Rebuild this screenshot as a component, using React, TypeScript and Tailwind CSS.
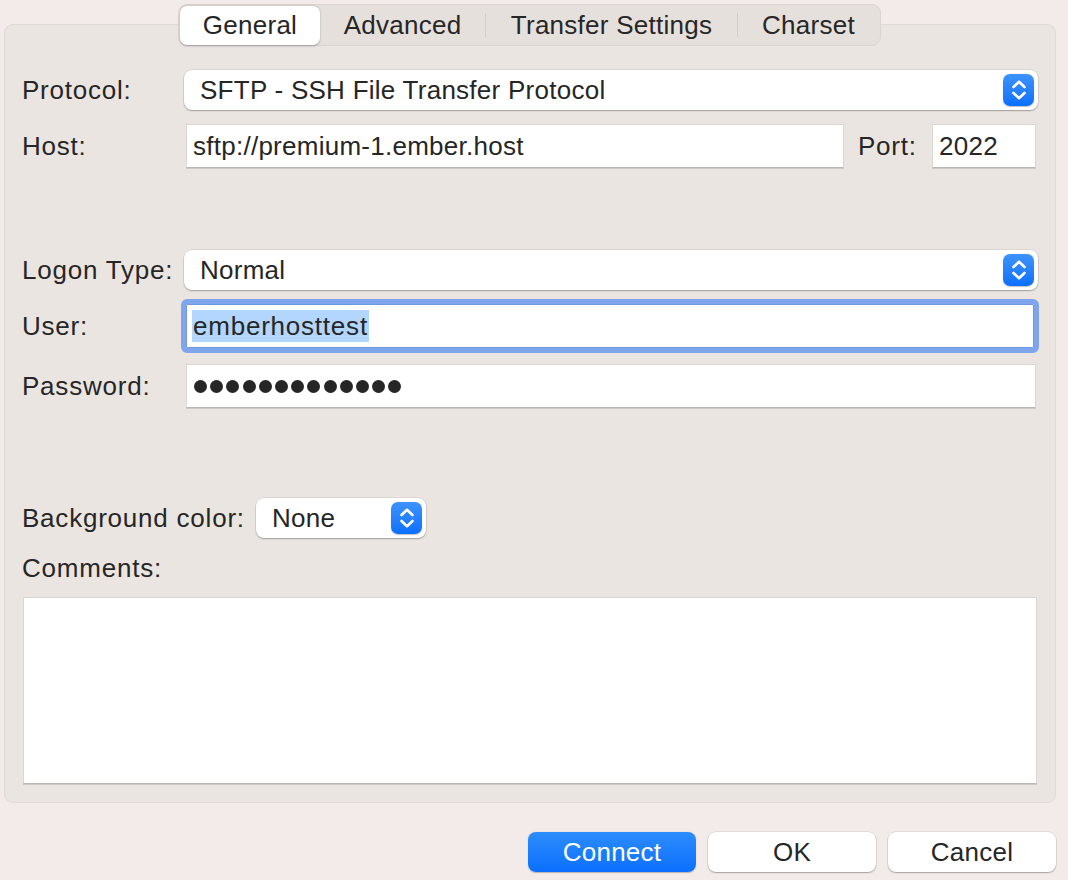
import React from "react";

function Stepper({ size = 32 }: { size?: number }) {
  return (
    <div className="flex items-center justify-center rounded-[7px] bg-gradient-to-b from-[#3d93fb] to-[#0a6ffe] shadow-[0_0.5px_1px_rgba(0,0,0,0.25)]" style={{ width: size - 1, height: size }}>
      <svg width="20" height="24" viewBox="0 0 20 24" fill="none">
        <path d="M4.5 9 L10 3.8 L15.5 9" stroke="white" strokeWidth="2.6" strokeLinecap="round" strokeLinejoin="round" />
        <path d="M4.5 15 L10 20.2 L15.5 15" stroke="white" strokeWidth="2.6" strokeLinecap="round" strokeLinejoin="round" />
      </svg>
    </div>
  );
}

function Select({ value, className = "" }: { value: string; className?: string }) {
  return (
    <div className={"flex h-[40px] items-center justify-between rounded-[8px] bg-white pl-[16px] pr-[4px] shadow-[0_0_0_0.5px_rgba(0,0,0,0.12),0_1px_1.5px_rgba(0,0,0,0.28)] " + className}>
      <span>{value}</span>
      <Stepper />
    </div>
  );
}

function Input({ children, className = "" }: { children?: React.ReactNode; className?: string }) {
  return (
    <div className={"flex h-[44px] items-center bg-white pl-[6px] border border-[#dcd6d3] border-b-[#bdb7b4] shadow-[0_0.5px_0.5px_rgba(0,0,0,0.12)] " + className}>
      {children}
    </div>
  );
}

export default function App() {
  const label = "w-[162px] shrink-0 tracking-[0.03em]";
  return (
    <div className="flex h-[880px] w-[1068px] flex-col overflow-hidden bg-[#f3ebe9] text-[26px] leading-none text-[#262626] font-['Liberation_Sans',Arial,sans-serif] tracking-[0.01em]">
      {/* Tabs */}
      <div className="relative z-10 ml-[178px] mt-[4px] flex h-[42px] w-[703px] items-center self-start rounded-[9px] border border-[#dbd5d2] bg-[#e6e0dd] pl-[1px]">
        <div className="flex h-[39px] w-[140px] items-center justify-center rounded-[7px] bg-white shadow-[0_0.5px_2px_rgba(0,0,0,0.3)]">General</div>
        <div className="flex h-[39px] w-[165px] items-center justify-center">Advanced</div>
        <div className="h-[24px] w-px bg-[#d3cdca]" />
        <div className="flex h-[39px] w-[251px] items-center justify-center">Transfer Settings</div>
        <div className="h-[24px] w-px bg-[#d3cdca]" />
        <div className="flex h-[39px] w-[141px] items-center justify-center">Charset</div>
      </div>

      {/* Group box */}
      <div className="mx-[4px] mt-[-22px] flex h-[779px] w-[1052px] flex-col rounded-[9px] border border-[#e0dad7] bg-[#ebe5e2] px-[17px] pt-[45px]">
        <div className="flex h-[40px] items-center">
          <div className={label}>Protocol:</div>
          <Select value="SFTP - SSH File Transfer Protocol" className="flex-1" />
        </div>
        <div className="mt-[14px] flex h-[44px] items-center">
          <div className={label}>Host:</div>
          <Input className="ml-[2px] w-[658px]">sftp://premium-1.ember.host</Input>
          <div className="ml-[14px] w-[74px] tracking-[0.03em]">Port:</div>
          <Input className="w-[104px]">2022</Input>
        </div>

        <div className="mt-[82px] flex h-[40px] items-center">
          <div className={label}>Logon Type:</div>
          <Select value="Normal" className="flex-1" />
        </div>
        <div className="mt-[14px] flex h-[44px] items-center">
          <div className={label}>User:</div>
          <div className="ml-[2px] mr-[4px] flex h-[44px] flex-1 items-center rounded-[1px] border border-[#6f98e2] bg-white pl-[5px] outline outline-[5px] outline-[#7fa6ec]">
            <span className="flex h-[32px] items-center bg-[#b3d6fe] px-px tracking-[0.03em]">emberhosttest</span>
          </div>
        </div>
        <div className="mt-[16px] flex h-[44px] items-center">
          <div className={label}>Password:</div>
          <Input className="ml-[2px] mr-[2px] flex-1 pl-[7px]">
            <span className="flex gap-[3.2px]">
              {Array.from({ length: 13 }).map((_, i) => (
                <span key={i} className="inline-block h-[13px] w-[13px] rounded-full bg-[#262626]" />
              ))}
            </span>
          </Input>
        </div>

        <div className="mt-[90px] flex h-[40px] items-center">
          <div className="w-[234px] shrink-0 tracking-[0.03em]">Background color:</div>
          <Select value="None" className="w-[170px]" />
        </div>
        <div className="mt-[15px] flex h-[30px] items-center tracking-[0.03em]">Comments:</div>
        <div className="mx-px mt-[14px] h-[187px] border border-[#dcd6d3] border-b-[#bdb7b4] bg-white shadow-[0_0.5px_0.5px_rgba(0,0,0,0.12)]" />
      </div>

      {/* Buttons */}
      <div className="mt-[29px] flex justify-end gap-[12px] pr-[12px]">
        <button className="flex h-[40px] w-[168px] items-center justify-center rounded-[8px] bg-gradient-to-b from-[#2c8cfc] to-[#0a6ffe] text-white shadow-[0_0.5px_1px_rgba(0,0,0,0.25)]">Connect</button>
        <button className="flex h-[40px] w-[168px] items-center justify-center rounded-[8px] bg-white shadow-[0_0_0_0.5px_rgba(0,0,0,0.12),0_1px_1.5px_rgba(0,0,0,0.28)]">OK</button>
        <button className="flex h-[40px] w-[168px] items-center justify-center rounded-[8px] bg-white shadow-[0_0_0_0.5px_rgba(0,0,0,0.12),0_1px_1.5px_rgba(0,0,0,0.28)]">Cancel</button>
      </div>
    </div>
  );
}
